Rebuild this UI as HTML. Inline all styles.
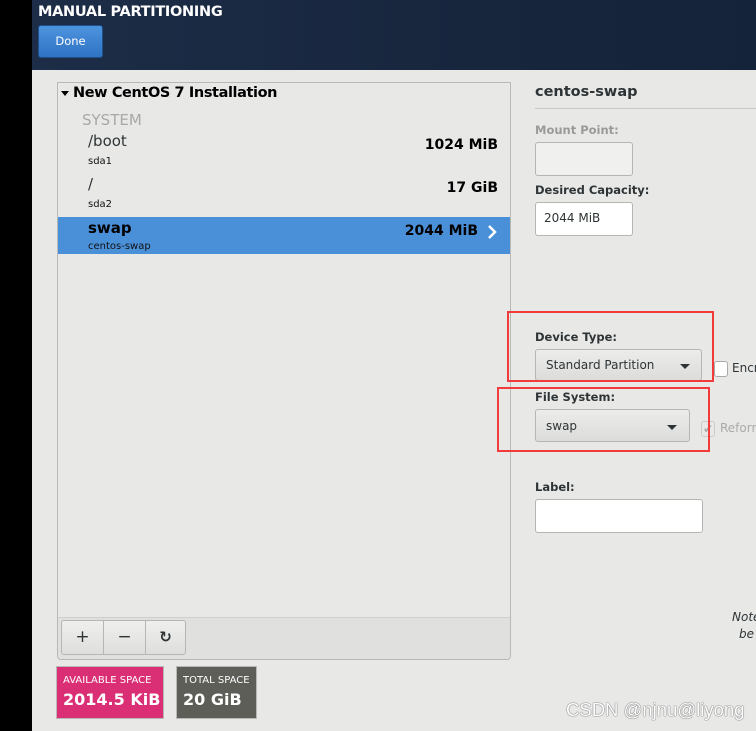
<!DOCTYPE html>
<html><head><meta charset="utf-8"><style>
*{margin:0;padding:0;box-sizing:border-box}
body{width:756px;height:731px;background:#e8e8e7;font-family:"DejaVu Sans","Liberation Sans",sans-serif;position:relative;overflow:hidden;color:#2e3436}
.a{position:absolute}
#blk{left:0;top:0;width:32px;height:731px;background:#000}
#hdr{left:32px;top:0;width:724px;height:70px;background:linear-gradient(90deg,#1d2d47,#17263d 60%,#15233a)}
#panel{left:57px;top:82px;width:454px;height:578px;border:1px solid #b8b8b6;border-radius:0 0 4px 4px}
.t{font-size:15px;color:#000}
.s{font-size:10px;color:#111}
.r{font-size:14px;font-weight:bold;color:#000;text-align:right}
.box{border:1px solid #b5b5b2;border-radius:3px;background:#fff}
.lab{font-size:11.5px;font-weight:bold;color:#2e3436}
.combo{border:1px solid #b6b6b3;border-radius:3px;background:linear-gradient(#ececea,#dcdcda);font-size:12px;color:#2e3436}
.red{border:2px solid #f23c3c}
.arrow{position:absolute;width:0;height:0;border-left:5px solid transparent;border-right:5px solid transparent;border-top:5px solid #2e3436}
</style></head><body>
<div class="a" id="blk"></div>
<div class="a" id="hdr"></div>
<div class="a" style="left:38px;top:4px;color:#fff;font-size:14.5px;font-weight:bold;letter-spacing:-0.3px">MANUAL PARTITIONING</div>
<div class="a" style="left:38px;top:25px;width:65px;height:33px;background:linear-gradient(#4d94de,#2f72c4);border:1px solid #1f4f8a;border-radius:3px;color:#fff;font-size:11.5px;text-align:center;line-height:31px">Done</div>

<div class="a" id="panel"></div>
<div class="a" style="left:61px;top:91px;width:0;height:0;border-left:4px solid transparent;border-right:4px solid transparent;border-top:5px solid #000"></div>
<div class="a t" style="left:73px;top:85px;font-size:14.5px;font-weight:bold;letter-spacing:-0.4px">New CentOS 7 Installation</div>
<div class="a" style="left:82px;top:111px;font-size:15px;color:#a8a8a6">SYSTEM</div>
<div class="a t" style="left:88px;top:132px;color:#2e3436">/boot</div>
<div class="a s" style="left:88px;top:156px">sda1</div>
<div class="a r" style="left:380px;top:137px;width:118px">1024 MiB</div>
<div class="a t" style="left:88px;top:175px;color:#2e3436">/</div>
<div class="a s" style="left:88px;top:199px">sda2</div>
<div class="a r" style="left:380px;top:180px;width:118px">17 GiB</div>
<div class="a" style="left:58px;top:217px;width:452px;height:37px;background:#4a90d9"></div>
<div class="a t" style="left:88px;top:219px;font-weight:bold">swap</div>
<div class="a s" style="left:88px;top:241px">centos-swap</div>
<div class="a r" style="left:380px;top:223px;width:98px">2044 MiB</div>
<svg class="a" style="left:486px;top:224px" width="12" height="16"><path d="M3 2 L9 8 L3 14" stroke="#fff" stroke-width="2.5" fill="none"/></svg>

<div class="a" style="left:58px;top:617px;width:452px;height:42px;background:#e0e0df;border-top:1px solid #cfcfcd;border-radius:0 0 4px 4px"></div>
<div class="a" style="left:61px;top:620px;width:125px;height:35px;border:1px solid #b6b6b3;border-radius:3px;background:linear-gradient(#efefed,#dededc);display:flex">
<div style="width:42px;border-right:1px solid #b6b6b3;text-align:center;line-height:33px;font-size:17px">+</div>
<div style="width:42px;border-right:1px solid #b6b6b3;text-align:center;line-height:33px;font-size:17px">−</div>
<div style="flex:1;text-align:center;line-height:33px;font-size:15px;font-weight:bold">↻</div></div>

<div class="a" style="left:56px;top:666px;width:108px;height:53px;background:#da2e75;border:1px solid #b8b8b6;color:#fff">
<div style="position:absolute;left:6px;top:8px;font-size:10px">AVAILABLE SPACE</div>
<div style="position:absolute;left:6px;top:23px;font-size:16px;font-weight:bold">2014.5 KiB</div></div>
<div class="a" style="left:176px;top:666px;width:81px;height:53px;background:#5d5e58;border:1px solid #b8b8b6;color:#fff">
<div style="position:absolute;left:6px;top:8px;font-size:10px">TOTAL SPACE</div>
<div style="position:absolute;left:6px;top:23px;font-size:16px;font-weight:bold">20 GiB</div></div>

<div class="a" style="left:535px;top:84px;font-size:14.5px;font-weight:bold">centos-swap</div>
<div class="a" style="left:535px;top:108px;width:221px;height:1px;background:#c8c8c6"></div>
<div class="a lab" style="left:535px;top:123px;color:#9a9a98">Mount Point:</div>
<div class="a box" style="left:535px;top:142px;width:98px;height:34px;background:#f0f0ef"></div>
<div class="a lab" style="left:535px;top:183px">Desired Capacity:</div>
<div class="a box" style="left:535px;top:202px;width:98px;height:34px;font-size:12px;padding:8px 8px">2044 MiB</div>

<div class="a lab" style="left:535px;top:330px">Device Type:</div>
<div class="a combo" style="left:535px;top:349px;width:167px;height:32px;padding:8px 10px">Standard Partition</div>
<div class="arrow" style="left:680px;top:364px"></div>
<div class="a" style="left:714px;top:361px;width:14px;height:16px;border:1px solid #aaa;border-radius:3px;background:#fff"></div>
<div class="a" style="left:732px;top:361px;font-size:12px;color:#2e3436">Encr</div>
<div class="a lab" style="left:535px;top:390px">File System:</div>
<div class="a combo" style="left:535px;top:409px;width:155px;height:33px;padding:9px 10px">swap</div>
<div class="arrow" style="left:667px;top:425px"></div>
<div class="a" style="left:701px;top:421px;width:14px;height:16px;border:1px solid #ccc;border-radius:3px;color:#aaa;font-size:12px;line-height:14px;text-align:center">✔</div>
<div class="a" style="left:720px;top:421px;font-size:12px;color:#aaa">Reforn</div>
<div class="a red" style="left:507px;top:311px;width:207px;height:71px"></div>
<div class="a red" style="left:497px;top:387px;width:213px;height:65px"></div>

<div class="a lab" style="left:535px;top:480px">Label:</div>
<div class="a box" style="left:535px;top:499px;width:168px;height:34px"></div>
<div class="a" style="left:732px;top:610px;font-size:12px;font-style:italic">Note</div>
<div class="a" style="left:739px;top:627px;font-size:12px;font-style:italic">be</div>
<div class="a" style="left:566px;top:699px;font-size:18.5px;color:#fff;text-shadow:0 0 1px #555,0 0 1px #555;font-family:'Liberation Sans',sans-serif">CSDN @njnu@liyong</div>
</body></html>
